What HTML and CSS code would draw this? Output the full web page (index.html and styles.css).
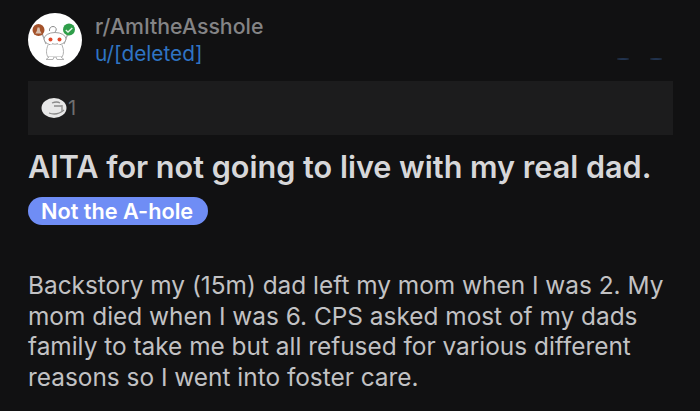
FILE: index.html
```html
<!DOCTYPE html>
<html lang="en">
<head>
<meta charset="utf-8">
<title>AITA</title>
<link rel="stylesheet" href="styles.css">
</head>
<body>
<main class="post">
  <header class="head">
    <div class="avatar">
      <svg viewBox="0 0 54 54" width="54" height="54">
        <circle cx="27" cy="27" r="27" fill="#fff"/>
        <path d="M21.500 18c-.5-3 1.500-4.500 3.500-4.500s3.500 1.500 3.200 3.500c-.4 2-3.200 3-3.700 5.500l5 .5" fill="none" stroke="#8a8a8a" stroke-width="1"/>
        <path d="M17 26l-6-8M37 26l6-8M14 20l4 11M40 20l-4 11" stroke="#a8a8a8" stroke-width="1.200" fill="none"/>
        <ellipse cx="27" cy="26" rx="11" ry="6.500" fill="#fff" stroke="#a0a0a0" stroke-width="1"/>
        <path d="M20 32c-2 5-2 9 0 12h14c2-3 2-7 0-12" fill="#fff" stroke="#b0b0b0" stroke-width="1"/>
        <path d="M21 44l-3 2.500h7l1-2.500M33 44l3 2.500h-7l-1-2.500" fill="#fff" stroke="#b0b0b0" stroke-width="1"/>
        <circle cx="22.500" cy="26.500" r="2" fill="#e0492b"/>
        <circle cx="31.500" cy="26.500" r="2" fill="#e0492b"/>
        <path d="M24 30.500q3 1.500 6 0" stroke="#a0a0a0" stroke-width=".8" fill="none"/>
        <circle cx="10.500" cy="17" r="6" fill="#a4522a"/>
        <path d="M7.300 20.500h6.400l-1.500-2.500-.7-3.500h-2l-.7 3.500z" fill="#d8bfae"/>
        <circle cx="41" cy="16.500" r="6" fill="#2f9e4a"/>
        <path d="M37.800 17l2.200 2 4.300-4" stroke="#e8f5ea" stroke-width="1.300" fill="none"/>
      </svg>
    </div>
    <div class="names">
      <span class="sub">r/AmItheAsshole</span>
      <span class="user">u/[deleted]</span>
    </div>
    <span class="glints"><i class="glint"></i><i class="glint"></i></span>
  </header>
  <section class="awards">
    <svg class="award" viewBox="0 0 27 22" width="27" height="22">
      <ellipse cx="13" cy="11" rx="12.500" ry="10" fill="#e8e8e8"/>
      <path d="M11 6q5-2 8 0M13 9h8M8 16q8 3 15-3" stroke="#8a8a8a" stroke-width="1.300" fill="none"/>
      <path d="M21 8v6" stroke="#999" stroke-width="1.500"/>
    </svg>
    <span class="count">1</span>
  </section>
  <h1 class="title">AITA for not going to live with my real dad.</h1>
  <span class="flair">Not the A-hole</span>
  <p class="body">Backstory my (15m) dad left my mom when I was 2. My mom died when I was 6. CPS asked most of my dads family to take me but all refused for various different reasons so I went into foster care.</p>
</main>
</body>
</html>
```
FILE: styles.css
```css
* { box-sizing: border-box; }
html, body { margin: 0; height: 100%; }
body {
  background: #111112;
  font-family: Inter, "Liberation Sans", sans-serif;
  overflow: hidden;
}
.post { padding: 13px 27px 0 28px; }
.head { display: flex; align-items: center; gap: 13px; position: relative; height: 54px; }
.avatar { width: 54px; height: 54px; flex: none; }
.avatar svg { display: block; }
.names { display: flex; flex-direction: column; }
.sub { font-size: 21.300px; line-height: 28px; font-weight: 500; color: #848486; }
.user { font-size: 20.800px; line-height: 28px; color: #2f74c4; }
.glints { position: absolute; left: 589px; top: 45px; display: flex; gap: 21px; }
.glint { display: block; width: 12px; height: 1.500px; border-radius: 50%; background: #22344f; }
.awards {
  margin-top: 14px;
  height: 54px;
  background: #1c1c1d;
  display: flex;
  align-items: center;
  padding: 0 0 0 13px;
}
.award { flex: none; }
.count { font-size: 20px; color: #6f6f70; line-height: 1; }
.title { margin: 14px 0 0; font-size: 30.600px; line-height: 36px; font-weight: 600; color: #d7d7d9; white-space: nowrap; }
.flair {
  display: inline-block;
  margin-top: 12px;
  height: 28px;
  padding: 0 15px 0 13px;
  border-radius: 14px;
  background: #6f8df5;
  color: #fff;
  font-size: 21.700px;
  line-height: 28px;
  font-weight: 600;
}
.body { margin: 45px 0 0; font-size: 24.400px; line-height: 30.700px; color: #c2c2c4; }
```
